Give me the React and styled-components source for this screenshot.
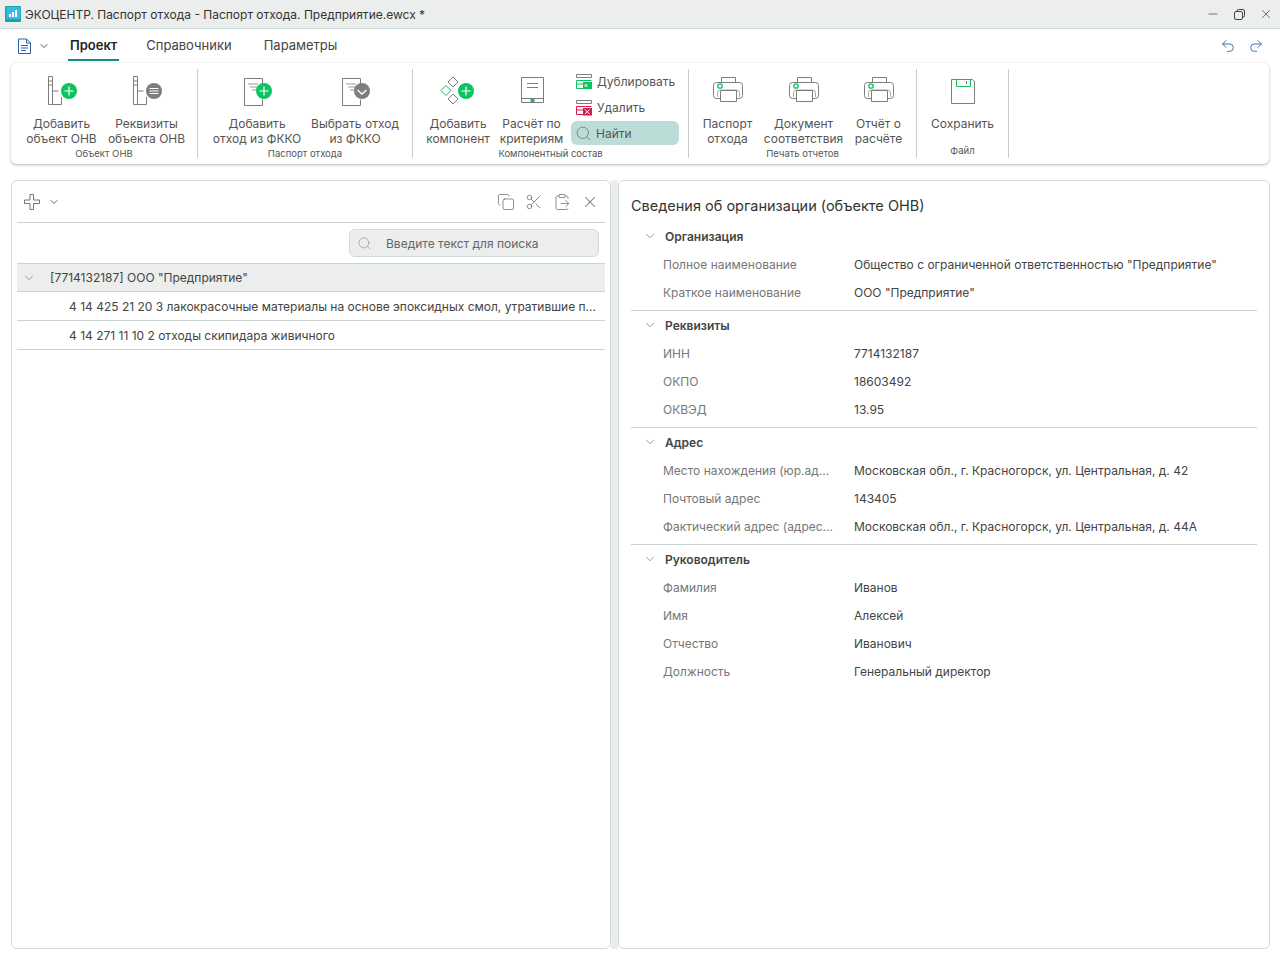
import styled, { createGlobalStyle } from "styled-components";
import { ChevronDown, Search, Copy, Scissors, ClipboardPaste, X, Minus, Undo2, Redo2 } from "lucide-react";

const Global = createGlobalStyle`
  html, body { margin: 0; padding: 0; background: #fff; }
  body { font-family: Inter, "Liberation Sans", sans-serif; color: #333; }
`;

const Page = styled.div`
  width: 1280px;
  height: 960px;
  display: flex;
  flex-direction: column;
  overflow: hidden;
`;

const TitleBar = styled.div`
  height: 28px;
  background: #ebeeed;
  border-bottom: 1px solid #c9dcd8;
  display: flex;
  align-items: center;
  padding-left: 5px;
  font-size: 12px;
  color: #333;
`;

const TitleText = styled.span`
  margin-left: 4px;
  flex: 1;
`;

const WinButtons = styled.div`
  display: flex;
  align-items: center;
  gap: 14px;
  padding-right: 7px;
  color: #444;
`;

const MenuRow = styled.div`
  height: 34px;
  display: flex;
  align-items: center;
  padding-left: 17px;
  padding-right: 16px;
`;

const Tab = styled.div`
  height: 30px;
  margin-top: 0;
  box-sizing: border-box;
  display: flex;
  align-items: center;
  font-size: 13px;
  font-weight: ${(p) => (p.$active ? 600 : 400)};
  color: ${(p) => (p.$active ? "#222" : "#444")};
  padding: 0 2px;
  margin-right: ${(p) => (p.$active ? "25px" : "28px")};
  border-bottom: 2px solid ${(p) => (p.$active ? "#0f8f84" : "transparent")};
`;

const MenuIcons = styled.div`
  display: flex;
  align-items: center;
  gap: 6px;
  width: 51px;
`;

const Spacer = styled.div`
  flex: 1;
`;

const UndoGroup = styled.div`
  display: flex;
  gap: 12px;
  color: #2f6fb5;
`;

const Ribbon = styled.div`
  margin: 0 11px;
  height: 101px;
  flex: none;
  border-radius: 6px;
  background: #fff;
  box-shadow: 0 1px 3px rgba(0, 0, 0, 0.3);
  display: flex;
  padding-top: 6px;
  box-sizing: border-box;
`;

const Group = styled.div`
  width: ${(p) => p.$w}px;
  height: 89px;
  border-right: 1px solid #c4d0cd;
  display: flex;
  flex-direction: column;
  align-items: center;
  box-sizing: border-box;
  flex: none;
`;

const GroupItems = styled.div`
  flex: 1;
  display: flex;
  justify-content: center;
  gap: ${(p) => p.$gap || 0}px;
`;

const GroupName = styled.div`
  font-size: 9.5px;
  color: #555;
  height: 15px;
  line-height: 15px;
  text-align: center;
`;

const Cmd = styled.div`
  width: ${(p) => p.$w}px;
  display: flex;
  flex-direction: column;
  align-items: center;
  color: #555;
  font-size: 12px;
  line-height: 15px;
  text-align: center;
  white-space: nowrap;
`;

const CmdIcon = styled.div`
  height: 39px;
  margin-bottom: 6px;
  margin-top: 2px;
  display: flex;
  align-items: center;
  justify-content: center;
`;

const SmallCol = styled.div`
  display: flex;
  flex-direction: column;
  gap: 2px;
  width: 108px;
  margin-left: 2px;
`;

const SmallCmd = styled.div`
  height: 24px;
  display: flex;
  align-items: center;
  gap: 4px;
  padding-left: 4px;
  border-radius: 6px;
  font-size: 12px;
  color: #555;
  background: ${(p) => (p.$on ? "#bcdcd8" : "transparent")};
`;

const Body = styled.div`
  flex: 1;
  display: flex;
  margin: 16px 10px 11px 11px;
  min-height: 0;
`;

const Splitter = styled.div`
  width: 7px;
  background: #eceeed;
  flex: none;
`;

const Panel = styled.div`
  box-sizing: border-box;
  width: ${(p) => p.$w}px;
  border: 1px solid #d3d9d7;
  border-radius: 6px;
  background: #fff;
  flex: none;
`;

const LeftToolbar = styled.div`
  height: 41px;
  margin: 0 5px;
  display: flex;
  align-items: center;
  padding: 0 6px;
  border-bottom: 1px solid #cbd3d1;
  color: #7a7a7a;
`;

const ToolGroup = styled.div`
  margin-left: auto;
  display: flex;
  gap: 10px;
  color: #777;
`;

const SearchRow = styled.div`
  height: 40px;
  margin: 0 5px;
  display: flex;
  align-items: center;
  justify-content: flex-end;
  padding-right: 6px;
`;

const SearchBox = styled.div`
  width: 250px;
  height: 28px;
  box-sizing: border-box;
  border: 1px solid #cfdbd8;
  border-radius: 6px;
  background: #ebeeed;
  display: flex;
  align-items: center;
  padding-left: 7px;
  font-size: 12px;
  color: #666;
  gap: 14px;
`;

const TreeRow = styled.div`
  height: 29px;
  margin: 0 5px;
  box-sizing: border-box;
  border-bottom: 1px solid #cbd3d1;
  border-top: ${(p) => (p.$head ? "1px solid #cbd3d1" : "none")};
  background: ${(p) => (p.$head ? "#ebeeed" : "#fff")};
  display: flex;
  align-items: center;
  font-size: 12px;
  color: #444;
  padding-left: ${(p) => (p.$head ? "5px" : "52px")};
  gap: 14px;
  white-space: nowrap;
`;

const RightTitle = styled.div`
  font-size: 14.5px;
  color: #333;
  padding: 16px 0 0 12px;
  height: 41px;
  line-height: 18px;
  box-sizing: border-box;
`;

const Section = styled.div`
  margin: 0 12px;
  padding-bottom: 4px;
  border-bottom: ${(p) => (p.$last ? "none" : "1px solid #cbd3d1")};
`;

const SectionHead = styled.div`
  height: 28px;
  display: flex;
  align-items: center;
  padding-left: 12px;
  gap: 8px;
  font-size: 12px;
  font-weight: 600;
  color: #444;
`;

const Field = styled.div`
  height: 28px;
  display: flex;
  align-items: center;
  padding-left: 32px;
  font-size: 12px;
`;

const FieldName = styled.div`
  width: 191px;
  color: #777;
  white-space: nowrap;
`;

const FieldValue = styled.div`
  color: #444;
`;

const Building = ({ badge }) => (
  <svg width="32" height="32" viewBox="0 0 32 32" fill="none">
    <path d="M2.5 1.5h4v28h-4zM2.5 6h4M2.5 10h4M6.5 16h6M6.5 29.5h9V22" stroke="#7d7d7d" />
    {badge === "plus" ? <Plus /> : <Lines />}
  </svg>
);

const Plus = () => (
  <g>
    <circle cx="23" cy="16" r="8" fill="#0cc45f" />
    <path d="M23 11.5v9M18.5 16h9" stroke="#fff" strokeWidth="1.2" />
  </g>
);

const Lines = () => (
  <g>
    <circle cx="23" cy="16" r="8" fill="#7d7d7d" />
    <path d="M18.5 13.5h9M18.5 16h9M18.5 18.5h9" stroke="#fff" />
  </g>
);

const Check = () => (
  <g>
    <circle cx="23" cy="16" r="8" fill="#7d7d7d" />
    <path d="M18.5 15l4.5 4 4.5-4" stroke="#fff" strokeWidth="1.4" />
  </g>
);

const Doc = ({ check }) => (
  <svg width="32" height="32" viewBox="0 0 32 32" fill="none">
    <path d="M3.5 3.5h18v8M3.5 3.5v27h18v-6" stroke="#7d7d7d" />
    <path d="M7 9h10M9 12h8M11 15h6" stroke="#9a9a9a" />
    {check ? <Check /> : <Plus />}
  </svg>
);

const Diamonds = () => (
  <svg width="36" height="32" viewBox="0 0 36 32" fill="none">
    <path d="M13 2l5 5-5 5-5-5z" stroke="#7d7d7d" />
    <path d="M6 10.5l5 5-5 5-5-5z" stroke="#0cc45f" />
    <path d="M13 19l5 5-5 5-5-5z" stroke="#7d7d7d" />
    <circle cx="26" cy="16" r="8" fill="#0cc45f" />
    <path d="M26 11.5v9M21.5 16h9" stroke="#fff" strokeWidth="1.2" />
  </svg>
);

const Tablet = () => (
  <svg width="26" height="32" viewBox="0 0 26 32" fill="none">
    <path d="M2.5 2.5h22v25h-22zM2.5 23.5h22M8 8.5h11M8 12.5h11" stroke="#7d7d7d" />
    <rect x="11.5" y="24" width="4" height="3" fill="#0cc45f" />
  </svg>
);

const Printer = () => (
  <svg width="32" height="30" viewBox="0 0 32 30" fill="none">
    <path d="M9.5 6.5v-5h14v5" stroke="#7d7d7d" />
    <path d="M8 22.5H4.5a3 3 0 0 1-3-3v-10a3 3 0 0 1 3-3h23a3 3 0 0 1 3 3v10a3 3 0 0 1-3 3H25" stroke="#7d7d7d" />
    <path d="M5.5 21v-4a3 3 0 0 1 3-3h16a3 3 0 0 1 3 3v4" stroke="#aaa" />
    <path d="M8.5 14.5h16v11h-16z" fill="#fff" stroke="#7d7d7d" />
    <circle cx="8" cy="10" r="2.2" stroke="#0cc45f" strokeWidth="1.3" />
  </svg>
);

const Floppy = () => (
  <svg width="26" height="28" viewBox="0 0 26 28" fill="none">
    <path d="M1.5 2.5h21l2 2v22h-23z" stroke="#7d7d7d" />
    <path d="M6.5 2.5v7h14v-7" stroke="#0cc45f" />
    <path d="M16.5 4v3" stroke="#7d7d7d" />
  </svg>
);

const Lists = ({ mark }) => (
  <svg width="18" height="17" viewBox="0 0 18 17" fill="none">
    <path d="M1.5 1.5h15v3h-15z" stroke="#7d7d7d" />
    {mark === "dup" ? (
      <g>
        <path d="M1.5 7.5h15M1.5 11h8M1.5 15.5h8M1.5 7.5v8" stroke="#0cc45f" />
        <rect x="8" y="9" width="9" height="7" fill="#0cc45f" />
        <path d="M9.5 11l3 3M12.5 11l-3 3" stroke="#fff" />
      </g>
    ) : (
      <g>
        <path d="M1.5 7.5h15M1.5 11h8M1.5 15.5h8M1.5 7.5v8" stroke="#d8184f" />
        <rect x="8" y="9" width="9" height="7.5" fill="#d8184f" />
        <path d="M10 10.5l4.5 4.5M14.5 10.5l-4.5 4.5" stroke="#fff" />
      </g>
    )}
  </svg>
);

const FileIcon = () => (
  <svg width="15" height="17" viewBox="0 0 15 17" fill="none">
    <path d="M1.5 1h8l4 4v10.5h-12zM9.5 1v4h4M4 7.5h7M4 10h7M4 12.5h5" stroke="#2d5fae" />
  </svg>
);

const AppLogo = () => (
  <svg width="16" height="16" viewBox="0 0 16 16">
    <rect width="16" height="16" rx="1" fill="#12a89b" />
    <rect x="1.5" y="1" width="14" height="12" fill="#3fb4ea" />
    <rect x="4" y="8" width="2" height="3" fill="#fff" />
    <rect x="7" y="6" width="2" height="5" fill="#fff" />
    <rect x="10" y="4" width="2" height="7" fill="#fff" />
  </svg>
);

const RestoreIcon = () => (
  <svg width="11" height="11" viewBox="0 0 11 11" fill="none">
    <rect x="0.5" y="2.5" width="8" height="8" rx="1.5" stroke="#444" />
    <path d="M3 2.5v-.5a1.5 1.5 0 0 1 1.5-1.5h4.5a1.5 1.5 0 0 1 1.5 1.5v4.5a1.5 1.5 0 0 1-1.5 1.5h-.5" stroke="#444" />
  </svg>
);

const BigPlus = () => (
  <svg width="18" height="18" viewBox="0 0 18 18" fill="none">
    <path d="M7 1.5h3.5V7H16.5v3.5H10.5V16.5H7V10.5H1.5V7H7z" stroke="#777" />
  </svg>
);

const sections = [
  {
    title: "Организация",
    rows: [
      ["Полное наименование", 'Общество с ограниченной ответственностью "Предприятие"'],
      ["Краткое наименование", 'ООО "Предприятие"'],
    ],
  },
  {
    title: "Реквизиты",
    rows: [
      ["ИНН", "7714132187"],
      ["ОКПО", "18603492"],
      ["ОКВЭД", "13.95"],
    ],
  },
  {
    title: "Адрес",
    rows: [
      ["Место нахождения (юр.ад...", "Московская обл., г. Красногорск, ул. Центральная, д. 42"],
      ["Почтовый адрес", "143405"],
      ["Фактический адрес (адрес...", "Московская обл., г. Красногорск, ул. Центральная, д. 44А"],
    ],
  },
  {
    title: "Руководитель",
    rows: [
      ["Фамилия", "Иванов"],
      ["Имя", "Алексей"],
      ["Отчество", "Иванович"],
      ["Должность", "Генеральный директор"],
    ],
  },
];

const Command = ({ w, icon, lines }) => (
  <Cmd $w={w}>
    <CmdIcon>{icon}</CmdIcon>
    {lines.map((l) => (
      <div key={l}>{l}</div>
    ))}
  </Cmd>
);

export default function App() {
  return (
    <Page>
      <Global />
      <TitleBar>
        <AppLogo />
        <TitleText>ЭКОЦЕНТР. Паспорт отхода - Паспорт отхода. Предприятие.ewcx *</TitleText>
        <WinButtons>
          <Minus size={14} strokeWidth={1.2} />
          <RestoreIcon />
          <X size={14} strokeWidth={1.2} />
        </WinButtons>
      </TitleBar>
      <MenuRow>
        <MenuIcons>
          <FileIcon />
          <ChevronDown size={12} color="#555" />
        </MenuIcons>
        <Tab $active>Проект</Tab>
        <Tab>Справочники</Tab>
        <Tab>Параметры</Tab>
        <Spacer />
        <UndoGroup>
          <Undo2 size={16} strokeWidth={1.4} />
          <Redo2 size={16} strokeWidth={1.4} />
        </UndoGroup>
      </MenuRow>
      <Ribbon>
        <Group $w={187}>
          <GroupItems>
            <Command w={85} icon={<Building badge="plus" />} lines={["Добавить", "объект ОНВ"]} />
            <Command w={85} icon={<Building badge="lines" />} lines={["Реквизиты", "объекта ОНВ"]} />
          </GroupItems>
          <GroupName>Объект ОНВ</GroupName>
        </Group>
        <Group $w={215}>
          <GroupItems>
            <Command w={100} icon={<Doc />} lines={["Добавить", "отход из ФККО"]} />
            <Command w={96} icon={<Doc check />} lines={["Выбрать отход", "из ФККО"]} />
          </GroupItems>
          <GroupName>Паспорт отхода</GroupName>
        </Group>
        <Group $w={276}>
          <GroupItems>
            <Command w={72} icon={<Diamonds />} lines={["Добавить", "компонент"]} />
            <Command w={75} icon={<Tablet />} lines={["Расчёт по", "критериям"]} />
            <SmallCol>
              <SmallCmd>
                <Lists mark="dup" />
                Дублировать
              </SmallCmd>
              <SmallCmd>
                <Lists mark="del" />
                Удалить
              </SmallCmd>
              <SmallCmd $on>
                <Search size={17} strokeWidth={1.2} color="#777" />
                Найти
              </SmallCmd>
            </SmallCol>
          </GroupItems>
          <GroupName>Компонентный состав</GroupName>
        </Group>
        <Group $w={228}>
          <GroupItems>
            <Command w={76} icon={<Printer />} lines={["Паспорт", "отхода"]} />
            <Command w={76} icon={<Printer />} lines={["Документ", "соответствия"]} />
            <Command w={74} icon={<Printer />} lines={["Отчёт о", "расчёте"]} />
          </GroupItems>
          <GroupName>Печать отчетов</GroupName>
        </Group>
        <Group $w={92}>
          <GroupItems>
            <Command w={80} icon={<Floppy />} lines={["Сохранить"]} />
          </GroupItems>
          <GroupName>Файл</GroupName>
        </Group>
      </Ribbon>
      <Body>
        <Panel $w={600}>
          <LeftToolbar>
            <BigPlus />
            <ChevronDown size={12} color="#666" style={{ marginLeft: 7 }} />
            <ToolGroup>
              <Copy size={18} strokeWidth={1.1} />
              <Scissors size={18} strokeWidth={1.1} />
              <ClipboardPaste size={18} strokeWidth={1.1} />
              <X size={18} strokeWidth={1.4} />
            </ToolGroup>
          </LeftToolbar>
          <SearchRow>
            <SearchBox>
              <Search size={15} strokeWidth={1.2} color="#999" />
              Введите текст для поиска
            </SearchBox>
          </SearchRow>
          <TreeRow $head>
            <ChevronDown size={14} strokeWidth={1.2} color="#777" />
            [7714132187] ООО "Предприятие"
          </TreeRow>
          <TreeRow>4 14 425 21 20 3 лакокрасочные материалы на основе эпоксидных смол, утратившие п...</TreeRow>
          <TreeRow>4 14 271 11 10 2 отходы скипидара живичного</TreeRow>
        </Panel>
        <Splitter />
        <Panel $w={652}>
          <RightTitle>Сведения об организации (объекте ОНВ)</RightTitle>
          {sections.map((s, i) => (
            <Section key={s.title} $last={i === sections.length - 1}>
              <SectionHead>
                <ChevronDown size={14} strokeWidth={1.2} color="#777" />
                {s.title}
              </SectionHead>
              {s.rows.map(([k, v]) => (
                <Field key={k}>
                  <FieldName>{k}</FieldName>
                  <FieldValue>{v}</FieldValue>
                </Field>
              ))}
            </Section>
          ))}
        </Panel>
      </Body>
    </Page>
  );
}
